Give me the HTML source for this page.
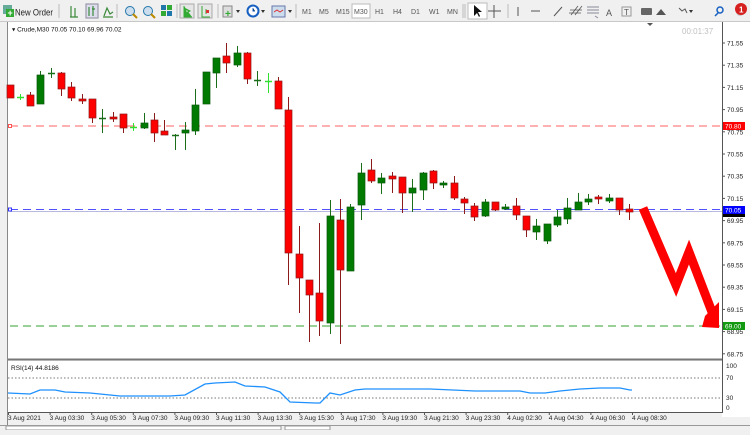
<!DOCTYPE html>
<html><head><meta charset="utf-8"><style>
body{margin:0;width:750px;height:430px;overflow:hidden;background:#f0f0f0;font-family:"Liberation Sans",sans-serif;}
svg text{font-family:"Liberation Sans",sans-serif;}
</style></head><body>
<svg id="s" width="750" height="430" xmlns="http://www.w3.org/2000/svg">
<rect x="0" y="0" width="750" height="430" fill="#f0f0f0"/>
<!-- toolbar -->
<line x1="0" y1="21.5" x2="750" y2="21.5" stroke="#c8c8c8"/>
<rect x="3" y="5" width="9" height="9" fill="#6a9" /><rect x="6" y="9" width="8" height="8" fill="#3a3"/><text x="7.5" y="16" font-size="9" fill="#fff" font-weight="bold">+</text>
<text x="15" y="15.5" font-size="9.5" fill="#222" textLength="38" lengthAdjust="spacingAndGlyphs">New Order</text>
<g stroke="#bbb"><line x1="59" y1="4" x2="59" y2="18"/><line x1="117" y1="4" x2="117" y2="18"/><line x1="177" y1="4" x2="177" y2="18"/><line x1="218" y1="4" x2="218" y2="18"/><line x1="296" y1="4" x2="296" y2="18"/><line x1="463" y1="4" x2="463" y2="18"/><line x1="465" y1="4" x2="465" y2="18"/><line x1="508" y1="4" x2="508" y2="18"/></g>
<g stroke="#3a8a3a" stroke-width="1.2" fill="none"><path d="M71 6v11M75 8v9M70 17h8"/><rect x="86" y="4" width="12" height="14" fill="#dde" stroke="#99a"/><path d="M89 7v9M93 6v10M92 9h3"/><path d="M103 17h10M104 16l3-8 3 6 3-2"/></g>
<g><circle cx="130" cy="11" r="4.5" fill="#cde" stroke="#27a"/><line x1="133" y1="14" x2="137" y2="18" stroke="#b80" stroke-width="2"/><circle cx="148" cy="11" r="4.5" fill="#cde" stroke="#27a"/><line x1="151" y1="14" x2="155" y2="18" stroke="#b80" stroke-width="2"/>
<rect x="161" y="5" width="5" height="5" fill="#27a"/><rect x="167" y="5" width="5" height="5" fill="#3a3"/><rect x="161" y="11" width="5" height="5" fill="#3a3"/><rect x="167" y="11" width="5" height="5" fill="#27a"/></g>
<rect x="180" y="4" width="14" height="14" fill="#e6e6e6" stroke="#aaa"/><path d="M184 6v11h8M186 9l4 2-4 2z" stroke="#3a3" fill="#3a3"/>
<rect x="198" y="4" width="14" height="14" fill="#e6e6e6" stroke="#aaa"/><path d="M202 6v11h8M206 9v5" stroke="#3a3" fill="none"/><rect x="206" y="10" width="3" height="3" fill="#d33"/>
<rect x="223" y="6" width="9" height="11" fill="#ddd" stroke="#888"/><text x="225" y="17" font-size="10" fill="#3a3" font-weight="bold">+</text><path d="M236 10l2 3 2-3z" fill="#333"/>
<circle cx="253" cy="11" r="5.5" fill="#fff" stroke="#1560c0" stroke-width="2"/><path d="M253 8v3h2" stroke="#1560c0"/><path d="M261 10l2 3 2-3z" fill="#333"/>
<rect x="272" y="6" width="13" height="11" fill="#cde" stroke="#67a"/><path d="M274 12l3-2 3 2 3-2" stroke="#d33" fill="none"/><path d="M288 10l2 3 2-3z" fill="#333"/>
<g font-size="7" fill="#555"><text x="302" y="14">M1</text><text x="319" y="14">M5</text><text x="336" y="14">M15</text><rect x="352" y="4" width="18" height="14" fill="#fff" stroke="#bbb"/><text x="354" y="14">M30</text><text x="375" y="14">H1</text><text x="393" y="14">H4</text><text x="411" y="14">D1</text><text x="429" y="14">W1</text><text x="447" y="14">MN</text></g>
<rect x="468" y="3" width="19" height="16" fill="#fff" stroke="#bbb"/><path d="M474 5v11l3-3 2 4 1-1-2-4h4z" fill="#111"/>
<path d="M494 5v13M488 11h13" stroke="#555"/>
<path d="M518 7v9M531 11h9M554 16l8-9" stroke="#555"/>
<path d="M571 15l7-9M575 15l7-9M570 10h12M569 13h12" stroke="#555" stroke-width="0.8"/>
<path d="M587 7h12M587 10h12M587 13h12M595 16l3 2" stroke="#889" /><text x="606" y="16" font-size="9" fill="#555">A</text>
<rect x="622" y="7" width="9" height="9" fill="none" stroke="#999"/><text x="624" y="15" font-size="8" fill="#555">T</text>
<rect x="641" y="8" width="11" height="7" rx="1" fill="#666"/><path d="M656 15l5-6 5 6z" fill="#555"/>
<path d="M679 8l3 3 3-2 2 4" stroke="#555" fill="none"/><path d="M689 10l2 3 2-3z" fill="#333"/>
<circle cx="720" cy="10" r="3" fill="none" stroke="#1560c0" stroke-width="1.5"/><line x1="718" y1="13" x2="715" y2="16" stroke="#1560c0" stroke-width="1.5"/>
<circle cx="740" cy="12" r="4" fill="#ccc"/><circle cx="741" cy="9" r="6" fill="#d62020"/><text x="739" y="12.5" font-size="8" fill="#fff" font-weight="bold">1</text>
<!-- left strip -->
<line x1="7.5" y1="22" x2="7.5" y2="430" stroke="#888"/>
<!-- chart -->
<rect x="8" y="22" width="714" height="337" fill="#fff"/>
<rect x="8" y="361" width="714" height="51" fill="#fff"/>
<rect x="722" y="22" width="28" height="395" fill="#fff"/>
<line x1="8" y1="359.5" x2="722" y2="359.5" stroke="#777" stroke-width="2"/>
<line x1="722.5" y1="22" x2="722.5" y2="412" stroke="#555"/>
<line x1="8" y1="412.5" x2="723" y2="412.5" stroke="#555"/>
<path d="M647 23l3 3 3-3z" fill="#555"/>
<text x="12" y="31.5" font-size="6.5" fill="#111">▾ Crude,M30  70.05 70.10 69.96 70.02</text>
<text x="682" y="34" font-size="8" fill="#c0c0c0">00:01:37</text>
<!-- lines -->
<line x1="10" y1="126" x2="722" y2="126" stroke="#ff6060" stroke-dasharray="8,5"/>
<rect x="8.5" y="124.5" width="3" height="3" fill="#fff" stroke="#f55"/>
<line x1="10" y1="209.5" x2="722" y2="209.5" stroke="#5050ff" stroke-dasharray="8,5"/>
<line x1="10" y1="211.5" x2="722" y2="211.5" stroke="#b8b8e0"/>
<rect x="8.5" y="208" width="3" height="3" fill="#fff" stroke="#33f"/>
<line x1="10" y1="326" x2="722" y2="326" stroke="#30a030" stroke-dasharray="8,5"/>
<g id="c"></g>
<!-- arrow -->
<polyline points="643,208 676,285 689,252 712,312" fill="none" stroke="#ff0000" stroke-width="9" stroke-linejoin="miter"/>
<polygon points="705,316 719,302 719,328 702,327" fill="#ff0000"/>
<!-- price labels -->
<g font-size="6.5" fill="#222" id="pl"></g>
<rect x="723" y="122" width="22" height="8" fill="#ff0000"/><text x="725" y="128.5" font-size="6.5" fill="#fff">70.80</text>
<rect x="723" y="206" width="22" height="8" fill="#0000ff"/><text x="725" y="212.5" font-size="6.5" fill="#fff">70.05</text>
<rect x="723" y="214" width="22" height="3" fill="#000"/>
<rect x="723" y="322" width="22" height="8" fill="#119911"/><text x="725" y="328.5" font-size="6.5" fill="#fff">69.00</text>
<!-- RSI -->
<text x="11" y="370" font-size="6.5" fill="#111">RSI(14) 44.8186</text>
<line x1="8" y1="378" x2="722" y2="378" stroke="#777" stroke-dasharray="1.5,2"/>
<line x1="8" y1="398" x2="722" y2="398" stroke="#777" stroke-dasharray="1.5,2"/>
<polyline fill="none" stroke="#1e90ff" stroke-width="1.3" points="8,393 30,394 40,390 55,390 65,392 90,393 120,396 170,396 185,395 205,384 215,383 235,382 245,386 265,387 280,392 290,402 315,403 320,403 330,393 340,395 355,390 365,389 375,389 430,389 475,391 520,391 530,393 545,393 560,391 580,389 600,388 620,388 630,390 632,390"/>
<g font-size="6.5" fill="#222"><text x="726" y="368">100</text><text x="726" y="380">70</text><text x="726" y="400">30</text><text x="726" y="410">0</text></g>
<g font-size="6.5" fill="#222" id="tl"></g>
<line x1="0" y1="425.5" x2="750" y2="425.5" stroke="#999"/>
<rect x="6" y="426" width="275" height="4" fill="#fff" stroke="#999"/>
<rect x="285" y="426" width="45" height="4" fill="#fff" stroke="#999"/>
</svg>
<script>
var NS="http://www.w3.org/2000/svg";
function el(p,t,a,tx){var e=document.createElementNS(NS,t);for(var k in a)e.setAttribute(k,a[k]);if(tx)e.textContent=tx;p.appendChild(e);return e;}
var d=[["r",85,98,85,98],["l",97,97,94,100],["r",95,106,92,106],["g",75,104,71,104],["g",73,73,68,78],["r",73,89,72,96],["r",87,98,82,101],["r",99,101,94,104],["r",99,118,99,123],["g",118,118,109,133],["r",117,119,112,122],["r",114,128,114,133],["l",127,127,123,131],["g",123,128,113,129],["r",120,133,113,142],["r",131,135,120,135],["g",135,135,134,150],["g",130,133,122,150],["g",105,131,89,135],["g",72,104,72,104],["g",58,73,58,88],["r",56,63,43,73],["g",53,65,46,67],["r",53,79,52,84],["g",80,80,71,86],["l",81,81,73,93],["r",81,109,77,109],["r",110,253,97,285],["r",254,278,226,313],["r",280,295,280,342],["r",293,321,223,336],["g",216,323,200,334],["r",220,270,199,344],["g",207,271,204,271],["g",173,205,163,220],["r",170,181,159,183],["g",178,183,173,194],["r",176,179,172,193],["r",177,193,177,213],["g",188,193,179,212],["g",173,190,172,200],["r",171,183,170,189],["g",183,185,181,188],["r",183,198,176,200],["r",199,203,197,214],["r",206,217,203,221],["g",202,216,199,217],["r",202,210,202,211],["g",207,209,204,210],["r",206,215,198,220],["r",216,230,216,237],["g",226,232,219,240],["g",224,241,224,244],["g",217,225,210,227],["g",208,219,198,224],["g",202,210,193,210],["g",199,202,194,205],["r",197,199,195,204],["g",198,201,194,203],["r",198,210,198,215],["r",209,212,204,220]];
var g=document.getElementById("c");
d.forEach(function(c,i){var x=Math.round(9.5+i*10.33)+0.5;var t=c[0];
var wc=t=="r"?"#8b1a1a":(t=="g"?"#1a6e1a":"#30e030");
el(g,"line",{x1:x,y1:c[3],x2:x,y2:c[4],stroke:wc});
var h=c[2]-c[1];
if(h<2){el(g,"line",{x1:x-3.5,y1:c[1]+0.5,x2:x+3.5,y2:c[1]+0.5,stroke:wc,"stroke-width":1.5});}
else el(g,"rect",{x:x-3.5,y:c[1],width:7,height:h,fill:t=="r"?"#ff0000":"#007a00",stroke:t=="r"?"#8b1a1a":"#0a5a0a","stroke-width":0.7});});
var pl=document.getElementById("pl");
for(var k=0;k<15;k++){var p=71.55-k*0.2;var y=43+(71.55-p)*111;el(pl,"text",{x:727,y:y+2.5},p.toFixed(2));el(pl,"line",{x1:722,y1:y,x2:725,y2:y,stroke:"#555"});}
var tl=document.getElementById("tl");
var L=["3 Aug 2021","3 Aug 03:30","3 Aug 05:30","3 Aug 07:30","3 Aug 09:30","3 Aug 11:30","3 Aug 13:30","3 Aug 15:30","3 Aug 17:30","3 Aug 19:30","3 Aug 21:30","3 Aug 23:30","4 Aug 02:30","4 Aug 04:30","4 Aug 06:30","4 Aug 08:30"];
L.forEach(function(s,i){var x=8+i*41.6;el(tl,"text",{x:x,y:420},s);el(tl,"line",{x1:x+0.5,y1:412,x2:x+0.5,y2:415,stroke:"#555"});});
</script>
</body></html>
